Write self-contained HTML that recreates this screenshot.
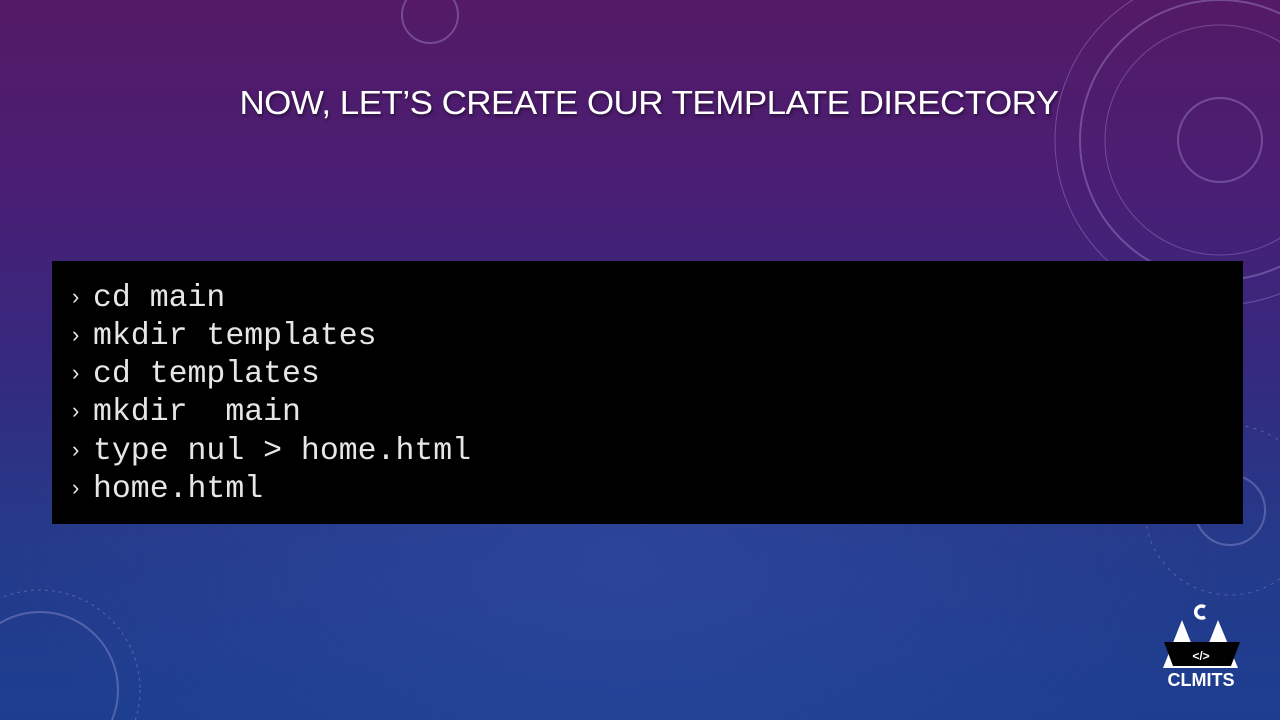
<!DOCTYPE html>
<html><head><meta charset="utf-8"><style>
html,body{margin:0;padding:0;overflow:hidden;width:1280px;height:720px}
body{position:relative;font-family:"Liberation Sans",sans-serif;
background:radial-gradient(ellipse 600px 300px at 620px 560px,rgba(50,80,170,.5),transparent),
linear-gradient(180deg,#541a66 0%,#4a1e74 25%,#35297e 50%,#253a8a 75%,#1d3e90 100%);}
.title{position:absolute;left:0;width:1298px;top:84px;text-align:center;color:#fff;font-size:33px;font-weight:400;letter-spacing:-0.5px;text-shadow:1px 2px 3px rgba(0,0,0,.5);transform:scaleX(1.06);transform-origin:649px 0}
.code{position:absolute;left:52px;top:261px;width:1191px;height:263px;background:#000}
.code div{position:absolute;left:20px;color:#e6e6e6;font-family:"Liberation Mono",monospace;font-size:31.5px;line-height:38px;white-space:pre}
.code span{font-family:"Liberation Sans",sans-serif;font-size:22px;display:inline-block;width:21px;vertical-align:2px}
svg.bg{position:absolute;left:0;top:0}
</style></head><body>
<svg class="bg" width="1280" height="720" fill="none" stroke="rgba(200,190,240,.3)">
<circle cx="1220" cy="140" r="165" stroke-width="1"/>
<circle cx="1220" cy="140" r="140" stroke-width="2"/>
<circle cx="1220" cy="140" r="115"/>
<circle cx="1220" cy="140" r="42" stroke-width="2"/>
<circle cx="430" cy="15" r="28" stroke-width="2"/>
<circle cx="40" cy="690" r="78" stroke-width="2"/>
<circle cx="40" cy="690" r="100" stroke-dasharray="3 4"/>
<circle cx="1230" cy="510" r="35" stroke-width="2"/>
<circle cx="1230" cy="510" r="85" stroke-dasharray="3 5"/>
</svg>
<div class="title">NOW, LET’S CREATE OUR TEMPLATE DIRECTORY</div>
<div class="code">
<div style="top:17px"><span>›</span>cd main</div>
<div style="top:55px"><span>›</span>mkdir templates</div>
<div style="top:93px"><span>›</span>cd templates</div>
<div style="top:131px"><span>›</span>mkdir  main</div>
<div style="top:170px"><span>›</span>type nul &gt; home.html</div>
<div style="top:208px"><span>›</span>home.html</div>
</div>
<svg style="position:absolute;left:1160px;top:600px" width="85" height="90">
<path d="M45 7 A6 6 0 1 0 45 17" stroke="#fff" stroke-width="3.5" fill="none"/>
<polygon points="3,68 22,20 41,68" fill="#fff"/>
<polygon points="39,68 58,20 78,68" fill="#fff"/>
<polygon points="4,42 80,42 71,66 13,66" fill="#000"/>
<text x="41" y="60" fill="#fff" font-family="Liberation Sans" font-weight="bold" font-size="12" text-anchor="middle">&lt;/&gt;</text>
<text x="41" y="86" fill="#fff" font-family="Liberation Sans" font-weight="bold" font-size="18" text-anchor="middle">CLMITS</text>
</svg>
</body></html>
